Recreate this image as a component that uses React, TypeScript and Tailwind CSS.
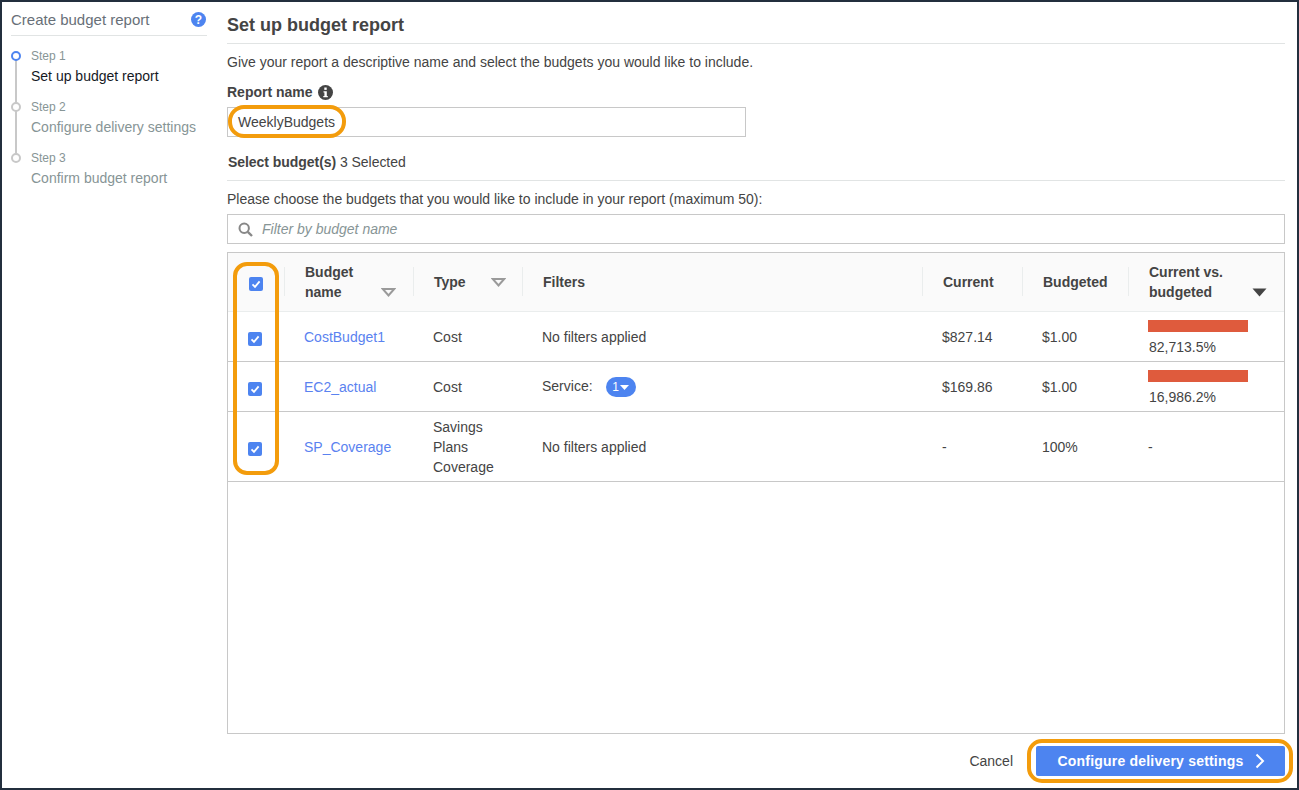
import React from "react";

const Check = ({ className }: { className: string }) => (
  <div className={`w-[14px] h-[14px] bg-[#4d84f0] rounded-[2px] flex items-center justify-center ${className}`}>
    <svg width="10" height="10" viewBox="0 0 10 10" fill="none">
      <path d="M1.5 5.3 L4 7.8 L8.6 2.4" stroke="#fff" strokeWidth="1.8" />
    </svg>
  </div>
);

const Caret = ({ dark }: { dark?: boolean }) =>
  dark ? (
    <svg width="15" height="9" viewBox="0 0 15 9"><path d="M0.5 0.5 H14.5 L7.5 8.5 Z" fill="#444" /></svg>
  ) : (
    <svg width="15" height="9" viewBox="0 0 15 9" fill="none"><path d="M1.8 1 H13.2 L7.5 7.5 Z" stroke="#9a9a9a" strokeWidth="2" /></svg>
  );

const Step = ({ n, label, active, last }: { n: number; label: string; active?: boolean; last?: boolean }) => (
  <div className="flex h-[51px]">
    <div className="relative w-5 shrink-0">
      <div className={`absolute left-0 top-[6px] w-[10px] h-[10px] rounded-full border-2 bg-white z-10 ${active ? "border-[#4d84f0]" : "border-[#c8c8c8]"}`} />
      {!last && <div className="absolute left-[4px] top-[10px] w-[2px] h-[51px] bg-[#c8c8c8]" />}
    </div>
    <div className="pt-px">
      <div className="text-[12px] leading-[20px] text-[#879596]">Step {n}</div>
      <div className={`text-[14px] leading-[20px] ${active ? "text-[#16191f]" : "text-[#879596]"}`}>{label}</div>
    </div>
  </div>
);

const cols = ["w-[57px]", "w-[129px]", "w-[109px]", "w-[400px]", "w-[100px]", "w-[106px]", "w-[155px]"];

const HeadCell = ({ i, children, sep = true }: { i: number; children?: React.ReactNode; sep?: boolean }) => (
  <div className={`${cols[i]} relative h-full flex items-center shrink-0`}>
    {children}
    {sep && <div className="absolute right-0 top-[14px] h-[29px] w-px bg-[#eaeded]" />}
  </div>
);

const Cell = ({ i, children }: { i: number; children?: React.ReactNode }) => (
  <div className={`${cols[i]} shrink-0 pl-[19px] pr-2 flex items-center h-full text-[14px] leading-[20px] text-[#444]`}>{children}</div>
);

const Bar = ({ pct }: { pct: string }) => (
  <div className="pt-[3px]">
    <div className="w-[100px] h-3 bg-[#df5b3d]" />
    <div className="mt-[5px] ml-px">{pct}</div>
  </div>
);

const Row = ({ name, type, filt, cur, bud, vs, h }: { name: string; type: React.ReactNode; filt: React.ReactNode; cur: string; bud: string; vs: React.ReactNode; h: string }) => (
  <div className={`flex items-center border-b border-[#c8c8c8] ${h}`}>
    <div className={`${cols[0]} shrink-0 h-full flex items-center pl-[20px]`}>
      <Check className="mt-[4px]" />
    </div>
    <div className={`${cols[1]} shrink-0 pl-[19px] text-[14px] text-[#5a82f0] pt-px`}>{name}</div>
    <Cell i={2}>{type}</Cell>
    <Cell i={3}>{filt}</Cell>
    <Cell i={4}>{cur}</Cell>
    <Cell i={5}>{bud}</Cell>
    <Cell i={6}>{vs}</Cell>
  </div>
);

export default function App() {
  return (
    <div className="w-[1299px] h-[790px] border-2 border-[#232f3e] bg-white flex overflow-hidden text-[#444]" style={{ fontFamily: '"Liberation Sans", Arial, sans-serif' }}>
      <aside className="w-[225px] shrink-0 pl-[9px] pr-[20px]">
        <div className="h-[34px] border-b border-[#e1e4e4] flex items-center justify-between pr-px pt-[2px]">
          <span className="text-[15px] text-[#687078] pt-[2px]">Create budget report</span>
          <svg width="15" height="15" viewBox="0 0 15 15" className="mb-[1px]">
            <circle cx="7.5" cy="7.5" r="7.5" fill="#4d84f0" />
            <text x="7.5" y="12" textAnchor="middle" fontSize="12" fontWeight="700" fill="#fff" fontFamily="Liberation Sans">?</text>
          </svg>
        </div>
        <div className="pt-[9px]">
          <Step n={1} label="Set up budget report" active />
          <Step n={2} label="Configure delivery settings" />
          <Step n={3} label="Confirm budget report" last />
        </div>
      </aside>

      <main className="w-[1058px] shrink-0 flex flex-col">
        <h1 className="h-[42px] border-b border-[#e1e4e4] flex items-center text-[18px] font-bold text-[#444] pt-[5px]">Set up budget report</h1>
        <p className="text-[14px] leading-[20px] mt-2">Give your report a descriptive name and select the budgets you would like to include.</p>
        <div className="flex items-center gap-[5px] mt-[10px] h-5">
          <span className="text-[14px] font-bold">Report name</span>
          <svg width="15" height="15" viewBox="0 0 15 15">
            <circle cx="7.5" cy="7.5" r="7.5" fill="#444" />
            <rect x="6.3" y="2.5" width="2.4" height="2.4" fill="#fff" />
            <path d="M5.5 6.2 H8.8 V11 H9.8 V12.3 H5.3 V11 H6.4 V7.5 H5.5 Z" fill="#fff" />
          </svg>
        </div>
        <div className="relative w-[519px] h-[30px] mt-[5px] border border-[#c8c8c8] flex items-center pl-[10px] text-[14px]">
          WeeklyBudgets
          <div className="absolute left-0 top-[-3px] w-[118px] h-[33px] border-[4px] border-[#f39c0c] rounded-[16px]" />
        </div>
        <div className="text-[14px] leading-5 mt-[15px] pl-px"><b className="tracking-[-0.05px]">Select budget(s)</b> <span className="tracking-[-0.05px]">3 Selected</span></div>
        <div className="border-b border-[#e1e4e4] mt-[8px]" />
        <p className="text-[14px] leading-5 mt-2">Please choose the budgets that you would like to include in your report (maximum 50):</p>
        <div className="h-[30px] mt-[5px] border border-[#c8c8c8] flex items-center pl-[10px] gap-[9px]">
          <svg width="15" height="15" viewBox="0 0 15 15" fill="none">
            <circle cx="6.2" cy="6.2" r="4.7" stroke="#888" strokeWidth="2" />
            <path d="M9.8 9.8 L14 14" stroke="#888" strokeWidth="2.4" />
          </svg>
          <span className="text-[14px] italic text-[#879596]">Filter by budget name</span>
        </div>

        <div className="relative mt-2 border border-[#c8c8c8] h-[482px]">
          <div className="flex h-[59px] bg-[#fafafa] border-b border-[#eaeded] text-[14px] leading-5 font-bold">
            <HeadCell i={0}>
              <Check className="ml-[21px] mt-[4px]" />
            </HeadCell>
            <HeadCell i={1}>
              <div className="pl-[20px]">Budget<br />name</div>
              <div className="absolute left-[96px] top-[35px]"><Caret /></div>
            </HeadCell>
            <HeadCell i={2}>
              <div className="pl-[20px] -mt-[1px]">Type</div>
              <div className="absolute left-[77px] top-[25px]"><Caret /></div>
            </HeadCell>
            <HeadCell i={3}><div className="pl-[20px] -mt-[1px]">Filters</div></HeadCell>
            <HeadCell i={4}><div className="pl-[20px] -mt-[1px]">Current</div></HeadCell>
            <HeadCell i={5}><div className="pl-[20px] -mt-[1px]">Budgeted</div></HeadCell>
            <HeadCell i={6} sep={false}>
              <div className="pl-[20px]">Current vs.<br />budgeted</div>
              <div className="absolute left-[123px] top-[35px]"><Caret dark /></div>
            </HeadCell>
          </div>
          <Row h="h-[50px]" name="CostBudget1" type="Cost" filt="No filters applied" cur="$827.14" bud="$1.00" vs={<Bar pct="82,713.5%" />} />
          <Row h="h-[50px]" name="EC2_actual" type="Cost" filt={
            <span className="flex items-center">
              <span className="-mt-[1px]">Service:</span>
              <span className="ml-[13px] mt-px w-[30px] h-5 rounded-[10px] bg-[#4d84f0] text-white text-[12px] flex items-center justify-center gap-[1px]">1
                <svg width="9" height="5" viewBox="0 0 9 5"><path d="M0 0 H9 L4.5 5 Z" fill="#fff" /></svg>
              </span>
            </span>
          } cur="$169.86" bud="$1.00" vs={<Bar pct="16,986.2%" />} />
          <Row h="h-[70px]" name="SP_Coverage" type={<span>Savings<br />Plans<br />Coverage</span>} filt="No filters applied" cur="-" bud="100%" vs="-" />
          <div className="absolute left-[5px] top-[9px] w-[46px] h-[213px] border-[4px] border-[#f39c0c] rounded-[14px]" />
        </div>

        <div className="flex items-center justify-end mt-[12px]">
          <span className="text-[14px] text-[#444] mr-[23px] pl-px">Cancel</span>
          <div className="relative w-[249px] h-[30px] bg-[#4d84f0] rounded-[2px] flex items-center justify-center gap-[12px] pl-[2px] text-white text-[14px] font-bold tracking-[0.2px]">
            Configure delivery settings
            <svg width="10" height="16" viewBox="0 0 10 16" fill="none"><path d="M1.5 1.5 L8 8 L1.5 14.5" stroke="#fff" strokeWidth="2" /></svg>
            <div className="absolute left-[-9px] top-[-7px] w-[266px] h-[44px] border-[4px] border-[#f39c0c] rounded-[15px]" />
          </div>
        </div>
      </main>
    </div>
  );
}
